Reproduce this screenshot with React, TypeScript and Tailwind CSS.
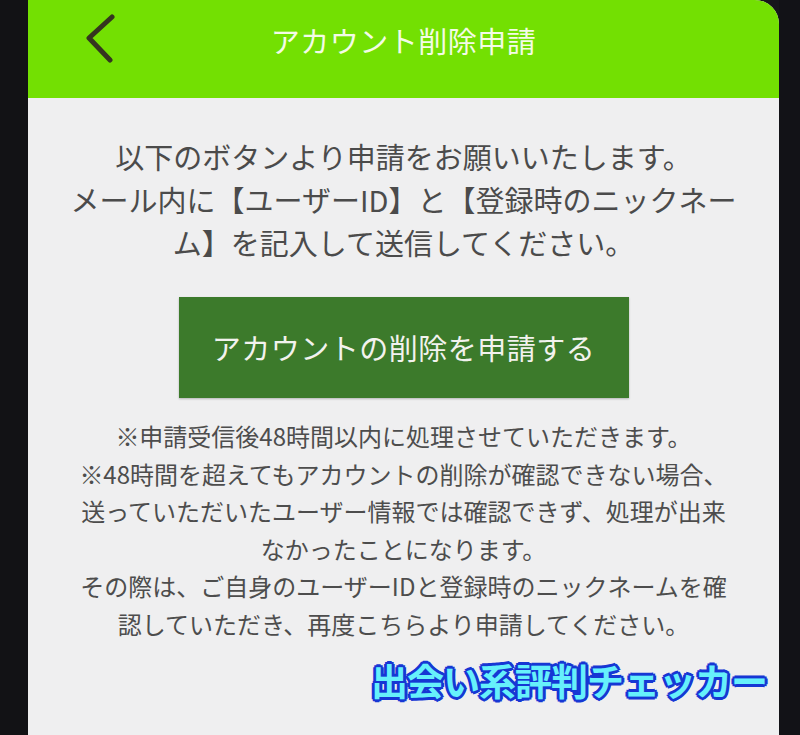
import React from 'react';

const jp = { fontFamily: '"Noto Sans CJK JP", "Noto Sans", sans-serif' };

function BackIcon() {
  return (
    <svg width="34" height="50" viewBox="0 0 34 50" fill="none">
      <polyline points="29,3 6,24 27,46" stroke="#35351f" strokeWidth="5" strokeLinecap="round" strokeLinejoin="round" />
    </svg>
  );
}

export default function App() {
  return (
    <div className="w-[800px] h-[735px] flex bg-[#16161b] overflow-hidden" style={jp}>
      <div className="w-[28px] shrink-0 bg-[#121215]" />
      <div className="w-[751px] shrink-0 flex flex-col bg-[#efeff0] rounded-tr-[24px] overflow-hidden">
        <header className="h-[98px] shrink-0 bg-[#73e002] grid grid-cols-[1fr_auto_1fr] items-start pt-[14px]">
          <div className="pl-[55px]">
            <BackIcon />
          </div>
          <h1 className="text-[29px] leading-[50px] text-[#f3fbe6] tracking-[0.5px] pt-[1px]">アカウント削除申請</h1>
          <div />
        </header>

        <main className="flex-1 flex flex-col items-center pt-[37px]">
          <p className="text-center text-[29px] leading-[43px] text-[#4b4b4b]">
            以下のボタンより申請をお願いいたします。
            <br />
            メール内に【ユーザーID】と【登録時のニックネー
            <br />
            ム】を記入して送信してください。
          </p>

          <button className="mt-[33px] w-[450px] h-[101px] bg-[#3c7a2b] text-[#f2f2ee] text-[29px] tracking-[0.5px] shadow-[0_1px_2px_rgba(0,0,0,0.25)]">
            アカウントの削除を申請する
          </button>

          <p className="mt-[19px] text-center text-[24px] leading-[37.5px] text-[#4d4d4d]">
            ※申請受信後48時間以内に処理させていただきます。
            <br />
            ※48時間を超えてもアカウントの削除が確認できない場合、
            <br />
            送っていただいたユーザー情報では確認できず、処理が出来
            <br />
            なかったことになります。
            <br />
            その際は、ご自身のユーザーIDと登録時のニックネームを確
            <br />
            認していただき、再度こちらより申請してください。
          </p>

          <div className="self-end mr-[12px] mt-[12px]">
            <span className="text-[37px] leading-[52px] font-bold text-[#66f0fb] tracking-[-1px] [text-shadow:3px_0_0_#1637d4,-3px_0_0_#1637d4,0_3px_0_#1637d4,0_-3px_0_#1637d4,2px_2px_0_#1637d4,-2px_-2px_0_#1637d4,2px_-2px_0_#1637d4,-2px_2px_0_#1637d4]">
              出会い系評判チェッカー
            </span>
          </div>
        </main>
      </div>
      <div className="flex-1 bg-[#121217]" />
    </div>
  );
}
